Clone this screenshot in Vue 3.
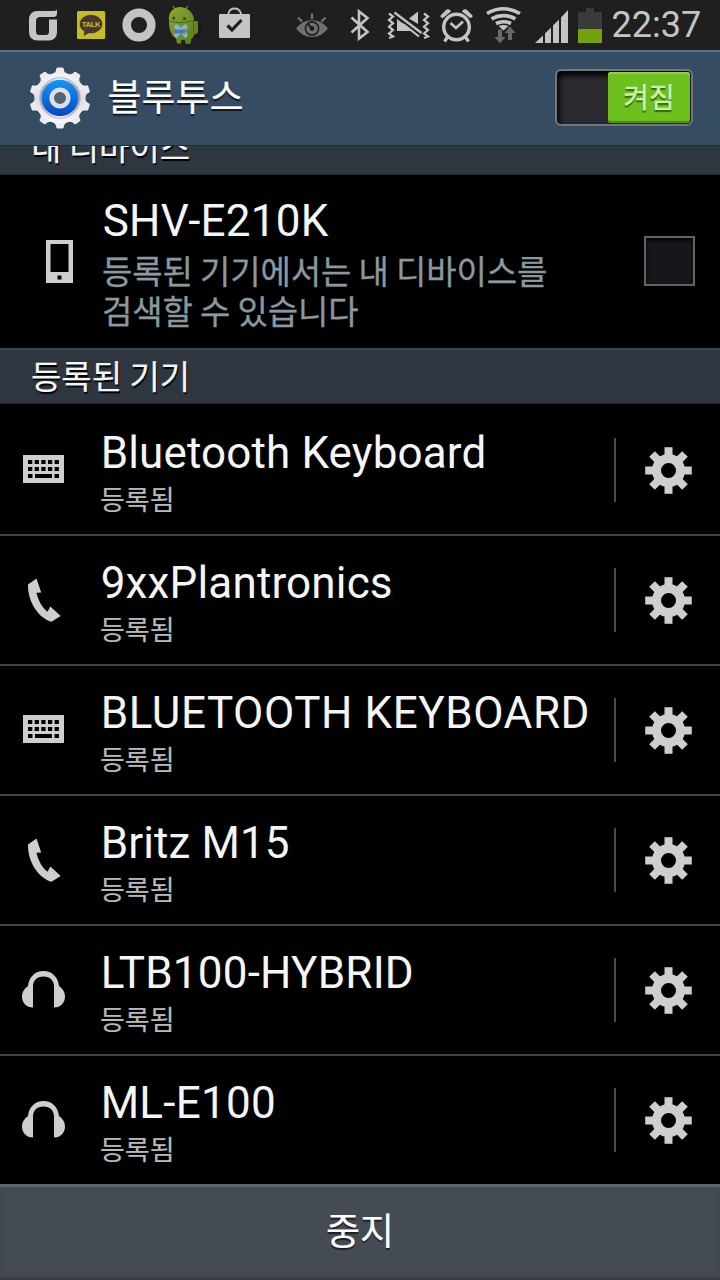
<template>
  <div class="screen">
    <div class="status-bar">
      <svg class="first" width="46" height="50" viewBox="20 0 46 50">
        <path d="M57 9.500q-1 1.500-4 1.500h-16a8 8 0 0 0-8 8v13.500a8 8 0 0 0 8 8h12a8 8 0 0 0 8-8v-13h-8v12q0 3.500-3 3.500h-6.500q-3.500 0-3.500-3.500v-10q0-4.500 4-4.500h13q4 0 4-3.500z" fill="#c4c4c4" />
      </svg>
      <svg width="46" height="50" viewBox="66 0 46 50">
        <rect x="77" y="11" width="28.200" height="28" rx="1.500" fill="#c5bd27" />
        <ellipse cx="91" cy="24" rx="11.300" ry="9.200" fill="#493735" />
        <path d="M84.500 30l-.8 6 7-4z" fill="#493735" />
        <text x="91" y="26.900" text-anchor="middle" class="talk">TALK</text>
      </svg>
      <svg width="48" height="50" viewBox="112 0 48 50">
        <circle cx="139" cy="25" r="12.300" fill="none" stroke="#c4c4c4" stroke-width="8.600" />
      </svg>
      <svg width="50" height="50" viewBox="160 0 50 50">
        <defs>
          <linearGradient id="droid" x1="0" y1="0" x2="1" y2="1">
            <stop offset="0" stop-color="#8bab31" />
            <stop offset="1" stop-color="#54781b" />
          </linearGradient>
        </defs>
        <ellipse cx="196" cy="30" rx="7" ry="8" fill="#1a1a1a" />
        <path d="M173 6l2.500 4M188 6l-3 4" stroke="#71922a" stroke-width="1.200" />
        <path d="M169 20c-1-8 5-13 11-13 7 0 13 5 14 12v2h2.500q1.500 0 1.500 2v9q-1 2.500-4 2.500c0 2-1 3.500-3 5v3q-1 1.500-5 1.500l-1.500-4h-3l-.5 3.500h-4l-1-5c-5-3-7-9-7-18.500z" fill="url(#droid)" />
        <path d="M169.500 21q11 3.500 24-.5v11" fill="none" stroke="#4c6d17" stroke-width="1.200" />
        <circle cx="173.700" cy="18" r="1.500" fill="#384b18" />
        <circle cx="184.500" cy="18.500" r="1.500" fill="#384b18" />
        <path d="M176 24q4 2 5 4 2-3 5-4l2 3q-1 2-3 3 2 3 3 6l-3 2-4-5-4 5-3-2q0-3 3-6-3-1-3-3z" fill="#89b5c9" />
        <path d="M174.500 29.500h11.500l-1 4h-10z" fill="#4977c5" />
      </svg>
      <svg width="60" height="50" viewBox="210 0 60 50">
        <path d="M228.500 15v-1.500q1-5 6-5t6.500 5v1.500" fill="none" stroke="#c4c4c4" stroke-width="1.800" />
        <rect x="219" y="14" width="31" height="24" rx="1" fill="#c4c4c4" />
        <path d="M227.500 25.500l4.500 4.500 9.500-10" fill="none" stroke="#1f1f1f" stroke-width="3.200" />
      </svg>
      <svg class="right" width="46" height="50" viewBox="290 0 46 50">
        <path d="M296 28.500q6.500-8.200 16-8.200t16 8.200q-6.500 8.500-16 8.500t-16-8.500z" fill="#717171" />
        <circle cx="312" cy="28.500" r="6.600" fill="none" stroke="#1f1f1f" stroke-width="1.600" />
        <circle cx="312" cy="28.500" r="2.400" fill="#1f1f1f" />
        <path d="M312 28.500l-4.500-5" stroke="#1f1f1f" stroke-width="2" />
        <path d="M298 17.500l4 4M312 13.500v5.500M325.500 17.500l-4 4" stroke="#717171" stroke-width="2.400" />
      </svg>
      <svg width="44" height="50" viewBox="336 0 44 50">
        <path d="M351.500 17.500l16 14.500-8.500 6.500v-27l8.500 6.500-16 14.500" fill="none" stroke="#c4c4c4" stroke-width="2.600" />
      </svg>
      <svg width="55" height="50" viewBox="380 0 55 50">
        <path d="M389 13.500l4 3-4 3.400 4 3.400-4 3.400 4 3.400-4 3.400 4 3-4 1.500M424 13.500l4 3-4 3.400 4 3.400-4 3.400 4 3.400-4 3.400 4 3-4 1.500" fill="none" stroke="#c4c4c4" stroke-width="2.200" />
        <path d="M409 18.500l9-7v12.500zM397 19l16 12h-16z" fill="#c4c4c4" />
        <path d="M394.500 12.500l27 20.500M403 24l16 12.500" stroke="#c4c4c4" stroke-width="2.200" />
      </svg>
      <svg width="43" height="50" viewBox="435 0 43 50">
        <circle cx="456.500" cy="27" r="12.800" fill="none" stroke="#c4c4c4" stroke-width="3.400" />
        <path d="M440.500 15.500l6-6q3.500-1 4.500 2l-8 6.500q-3 0-2.500-2.500zM472.500 15.500l-6-6q-3.500-1-4.500 2l8 6.500q3 0 2.500-2.500z" fill="#c4c4c4" />
        <path d="M447.500 37l-3 4.500M465.500 37l3 4.500" stroke="#c4c4c4" stroke-width="3.200" />
        <path d="M450.500 23l5.500 5 7-6.500" fill="none" stroke="#c4c4c4" stroke-width="2.700" />
      </svg>
      <svg width="50" height="50" viewBox="478 0 50 50">
        <g fill="none" stroke="#c4c4c4" stroke-width="3.700">
          <path d="M487 13.500q16.500-9.500 33 0" />
          <path d="M491.500 18.800q12-6.500 24 0" />
          <path d="M496 23.500q7.500-3.500 15 0" />
        </g>
        <path d="M498.500 26q5-2 10 0l-5 4.500z" fill="#c4c4c4" />
        <path d="M500 29.500v8M510 32v8" stroke="#686868" stroke-width="4" />
        <path d="M494.500 37h11l-5.500 6.500zM504.500 33h11l-5.500-6.500z" fill="#686868" />
      </svg>
      <svg width="45" height="50" viewBox="528 0 45 50">
        <path d="M535 43l8-7.500v7.500zM545 33.500l6-6v15.500h-6zM553 25.500l6-6v23.500h-6zM561 17.500l7-7.500v33h-7z" fill="#c4c4c4" />
      </svg>
      <svg width="34" height="50" viewBox="573 0 34 50">
        <path d="M578 12h8v-4h8v4h8v17h-24z" fill="#3a3a3a" />
        <path d="M578 29h24v14h-24z" fill="#73a30a" />
      </svg>
      <span class="clock">22:37</span>
    </div>

    <div class="action-bar">
      <svg class="settings-icon" width="64" height="64" viewBox="-32 -32 64 64">
        <defs>
          <linearGradient id="silver" x1="0" y1="0" x2="0" y2="1">
            <stop offset="0" stop-color="#f4f4f6" />
            <stop offset=".5" stop-color="#dfe0e6" />
            <stop offset="1" stop-color="#f6f6f6" />
          </linearGradient>
          <linearGradient id="rim" x1="0" y1="0" x2="1" y2="0">
            <stop offset="0" stop-color="#9698a8" />
            <stop offset=".5" stop-color="#fafafa" />
            <stop offset="1" stop-color="#9698a8" />
          </linearGradient>
          <linearGradient id="blue" x1="0" y1="0" x2="0" y2="1">
            <stop offset="0" stop-color="#1397fc" />
            <stop offset="1" stop-color="#0547c2" />
          </linearGradient>
        </defs>
        <g fill="#ececef">
          <path v-for="n in 10" :key="n" d="M-8-24q4-1 4.300-5.500q.3-1 1.700-1h4q1.400 0 1.700 1q.3 4.500 4.300 5.500v4h-16z" :transform="`rotate(${n * 36})`" />
        </g>
        <circle r="25.500" fill="url(#silver)" />
        <circle r="20.300" fill="url(#rim)" stroke="#b9bbc5" stroke-width="1" />
        <circle r="18.200" fill="url(#blue)" />
        <circle r="8.300" fill="#506478" stroke="#dddfe5" stroke-width="4.600" />
      </svg>
      <h1 class="title">블루투스</h1>
      <div class="toggle">
        <span class="thumb">켜짐</span>
      </div>
    </div>

    <div class="content">
      <div class="section"><span>내 디바이스</span></div>
      <div class="my-device">
        <svg class="phone-icon" width="28" height="44" viewBox="0 0 28 44">
          <path d="M0 0h27v43h-27zM4.500 4v28h18v-28zM11.500 35.500v4h4v-4z" fill="#cecece" fill-rule="evenodd" />
        </svg>
        <div class="my-text">
          <div class="name my-name">SHV-E210K</div>
          <div class="desc">등록된 기기에서는 내 디바이스를<br>검색할 수 있습니다</div>
        </div>
        <div class="checkbox"></div>
      </div>

      <div class="section"><span>등록된 기기</span></div>
      <div class="device-list">
        <div v-for="device in devices" :key="device.name" class="device">
          <div class="device-icon">
            <svg v-if="device.type === 'keyboard'" width="42" height="28" viewBox="0 0 42 28">
              <path d="M0 0h41v28h-41z" fill="#cecece" />
              <path d="M5 7h31M5 14h31" stroke="#000" stroke-width="4" stroke-dasharray="4.300 2.350" />
              <path d="M5 21h4.500M12 21h17M31.500 21h4.500" stroke="#000" stroke-width="4" />
            </svg>
            <svg v-else-if="device.type === 'phone'" class="phone" width="34" height="44" viewBox="28 578 34 44">
              <path d="M28 584.500l8.500-6 4.700 14-4.700.2c1.500 7.500 5.500 14.500 11 19l2.800-5.200 10.400 9.500-9.200 5.700c-13-3.500-24-20-23.500-37.200z" fill="#cecece" />
            </svg>
            <svg v-else class="headset" width="44" height="38" viewBox="0 0 44 38">
              <path d="M11 36.500c-7 0-11-5-11-11 0-4.500 2.500-8 6-10.500 1-9 7-15 15.500-15s14.500 6 15.500 15c3.500 2.500 6 6 6 10.500 0 6-4 11-11 11v-21c0-6-4-10-10.500-10s-10.500 4-10.500 10z" fill="#cecece" />
            </svg>
          </div>
          <div class="device-text">
            <div class="name" :style="{ letterSpacing: device.tracking + 'px' }">{{ device.name }}</div>
            <div class="state">등록됨</div>
          </div>
          <div class="device-settings">
            <svg width="48" height="48" viewBox="-24.5 -24.5 48 48" fill="#cecece">
              <path v-for="n in 8" :key="n" d="M-4-23.300h8v10h-8z" :transform="`rotate(${n * 45})`" />
              <circle r="12" fill="none" stroke="#cecece" stroke-width="9" />
            </svg>
          </div>
        </div>
      </div>
    </div>

    <div class="footer">중지</div>
  </div>
</template>

<script setup>
const devices = [
  { name: 'Bluetooth Keyboard', type: 'keyboard', tracking: 0.13 },
  { name: '9xxPlantronics', type: 'phone', tracking: 0.16 },
  { name: 'BLUETOOTH KEYBOARD', type: 'keyboard', tracking: 0.57 },
  { name: 'Britz M15', type: 'phone', tracking: 0.1 },
  { name: 'LTB100-HYBRID', type: 'headset', tracking: 0.22 },
  { name: 'ML-E100', type: 'headset', tracking: 0.25 },
]
</script>

<style>
body {
  margin: 0;
  background: #000;
}
</style>

<style scoped>
.screen {
  width: 720px;
  height: 1280px;
  display: flex;
  flex-direction: column;
  overflow: hidden;
  background: #000;
  color: #f5f5f5;
  font-family: 'Noto Sans CJK KR', sans-serif;
}

.status-bar {
  height: 50px;
  flex: none;
  display: flex;
  background: #1f1f1f;
}

.status-bar svg {
  flex: none;
}

.first {
  margin-left: 20px;
}

.right {
  margin-left: 20px;
}

.talk {
  font-family: 'Liberation Sans', sans-serif;
  font-size: 7.8px;
  font-weight: 700;
  letter-spacing: -0.4px;
  fill: #c5bd27;
}

.clock {
  margin-left: 4.5px;
  font-family: Roboto, sans-serif;
  font-size: 36px;
  line-height: 50px;
  color: #c4c4c4;
  white-space: nowrap;
}

.action-bar {
  height: 96px;
  flex: none;
  box-sizing: border-box;
  display: flex;
  align-items: center;
  padding: 0 27px 2px 28px;
  background: #364c62;
  border-top: 2px solid #56708a;
  border-bottom: 1px solid #1d2a38;
}

.settings-icon {
  flex: none;
}

.title {
  flex: 1;
  margin: 0 0 6px 15.5px;
  font-size: 37px;
  line-height: 50px;
  font-weight: 400;
  color: #fff;
  -webkit-text-stroke: 0.2px #fff;
  text-shadow: 0 2px 1px rgba(0, 0, 0, 0.7);
}

.toggle {
  width: 138px;
  height: 57px;
  box-sizing: border-box;
  display: flex;
  justify-content: flex-end;
  padding: 1px;
  border: 2px solid #74767b;
  border-radius: 6px;
  background: #2a2a30;
  box-shadow: inset 2px 4px 6px #000;
}

.thumb {
  width: 82px;
  height: 51px;
  box-sizing: border-box;
  border-radius: 3px;
  background: #6ec01e;
  box-shadow: inset 0 2px 1px #94d257, inset 0 -2px 1px #4d8c13;
  color: #caf0a2;
  font-size: 28px;
  line-height: 48px;
  font-weight: 500;
  text-align: center;
  text-shadow: 0 2px 1px rgba(30, 70, 0, 0.7);
}

.content {
  height: 1038px;
  flex: none;
  display: flex;
  flex-direction: column;
  justify-content: flex-end;
  overflow: hidden;
}

.section {
  height: 56px;
  flex: none;
  box-sizing: border-box;
  padding-left: 31px;
  border-top: 2px solid #3c4956;
  border-bottom: 1px solid #1e252b;
  background: #2e3740;
  font-size: 33px;
  line-height: 51px;
  -webkit-text-stroke: 0.2px #f5f5f5;
  text-shadow: 1px 2px 1px #000;
}

.my-device {
  height: 173px;
  flex: none;
  display: flex;
}

.phone-icon {
  margin: 65px 0 0 46px;
}

.my-text {
  flex: 1;
  padding: 20px 0 0 28px;
}

.name {
  margin-left: 0.7px;
  font-family: Roboto, sans-serif;
  font-size: 44px;
  line-height: 52px;
  white-space: nowrap;
}

.my-name {
  letter-spacing: 0.25px;
}

.desc {
  margin-top: 3px;
  font-size: 33px;
  line-height: 40px;
  letter-spacing: -0.12px;
  color: #8a989f;
  -webkit-text-stroke: 0.3px #8a989f;
}

.checkbox {
  width: 51px;
  height: 50px;
  box-sizing: border-box;
  margin: 61px 25px 0 0;
  border: 2px solid #626262;
  background: #15161a;
  box-shadow: inset 0 3px 3px #08080a;
}

.device-list {
  padding-top: 2px;
}

.device {
  height: 130px;
  box-sizing: border-box;
  display: flex;
  border-bottom: 2px solid #424242;
}

.device:last-child {
  height: 128px;
  border-bottom: none;
}

.device-icon {
  width: 100px;
  box-sizing: border-box;
  padding: 49px 0 0 23px;
}

.device-icon svg {
  display: block;
}

.device-icon .phone {
  margin: -7px 0 0 5px;
}

.device-icon .headset {
  margin: -4px 0 0 -1px;
}

.device-text {
  flex: 1;
  padding-top: 21px;
}

.state {
  margin-top: 2px;
  font-size: 27px;
  line-height: 36px;
  color: #b9b9b9;
  -webkit-text-stroke: 0.2px #b9b9b9;
}

.device-settings {
  width: 106px;
  height: 64px;
  box-sizing: border-box;
  margin-top: 32px;
  padding: 8px 0 0 28px;
  border-left: 2px solid #4c4c4c;
}

.footer {
  flex: 1;
  box-sizing: border-box;
  border-top: 3px solid #5b6670;
  background: #444b52;
  box-shadow: inset 0 -4px 4px -2px #30363b;
  color: #fff;
  font-size: 37px;
  line-height: 84px;
  text-align: center;
  -webkit-text-stroke: 0.2px #fff;
  text-shadow: 0 2px 1px rgba(0, 0, 0, 0.6);
}
</style>
